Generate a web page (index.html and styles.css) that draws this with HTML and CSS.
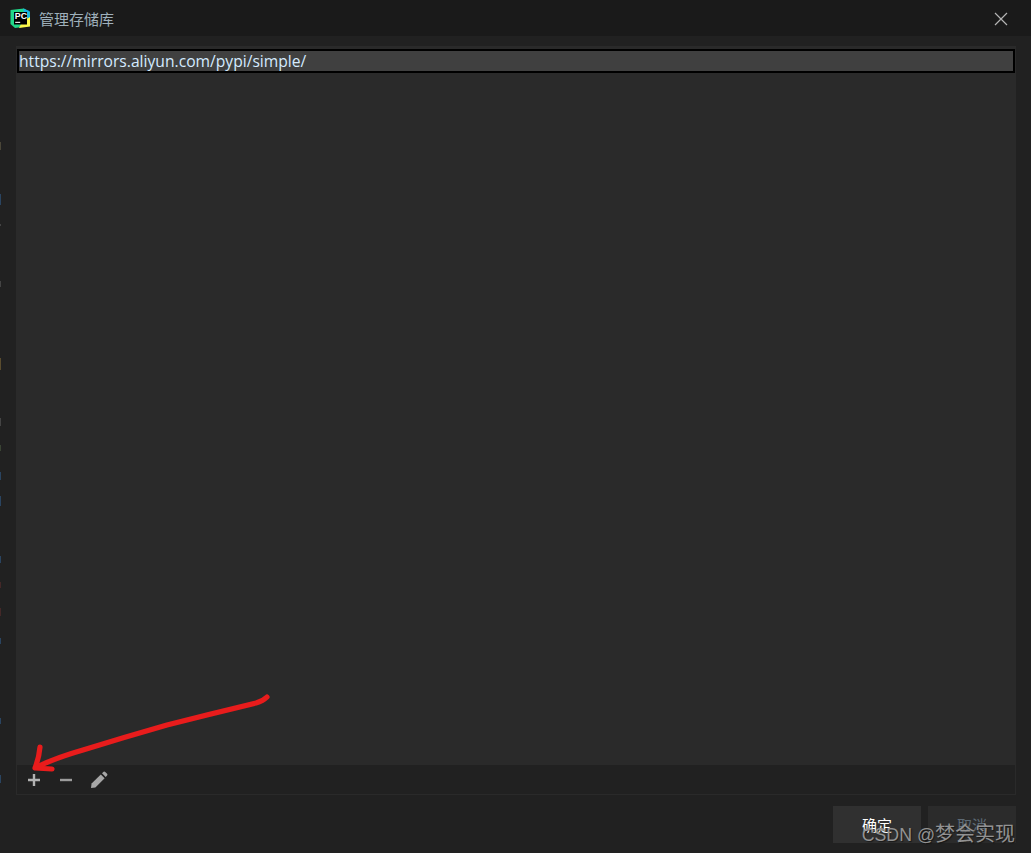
FILE: index.html
```html
<!DOCTYPE html>
<html lang="zh">
<head>
<meta charset="utf-8">
<title>管理存储库</title>
<link rel="stylesheet" href="styles.css">
</head>
<body>
<div class="dialog">
  <header class="titlebar">
    <svg class="logo" viewBox="0 0 20 20" width="20" height="20" aria-hidden="true">
      <path d="M0.5 2 L14 0.5 L20 4 L20 18 L5 20 L0.5 16 Z" fill="#21d789"/>
      <path d="M13 0.5 L19.5 3 L20 11 L15 9 Z" fill="#19b4e6"/>
      <path d="M20 9 L20 18.5 L9 20 L12 14 Z" fill="#fcf84a"/>
      <rect x="4" y="4" width="13" height="12.5" fill="#000"/>
      <text x="4.8" y="11.4" class="logo-text">PC</text>
      <rect x="5.2" y="13.8" width="5" height="1.1" fill="#fff"/>
    </svg>
    <span class="title">管理存储库</span>
    <svg class="close" viewBox="0 0 14 14" width="14" height="14" aria-hidden="true">
      <path d="M1 1 L13 13 M13 1 L1 13" stroke="#b4b4b4" stroke-width="1.2" fill="none"/>
    </svg>
  </header>
  <main class="content">
    <section class="panel">
      <div class="list">
        <div class="row">https://mirrors.aliyun.com/pypi/simple/</div>
      </div>
      <div class="toolbar">
        <svg class="tool" viewBox="0 0 16 16" width="16" height="16" aria-hidden="true">
          <path d="M2 8 H14 M8 2 V14" stroke="#b2b2b2" stroke-width="2.4" fill="none"/>
        </svg>
        <svg class="tool" viewBox="0 0 16 16" width="16" height="16" aria-hidden="true">
          <path d="M2 8 H14" stroke="#9c9c9c" stroke-width="2.4" fill="none"/>
        </svg>
        <svg class="tool" viewBox="0 0 18 18" width="18" height="18" aria-hidden="true">
          <path d="M1 17 L1.6 12.6 L10.8 3.4 L14.6 7.2 L5.4 16.4 Z" fill="#a6a6a6"/>
          <path d="M12 2.2 L13.6 0.8 Q14.4 0.2 15.2 0.9 L17.1 2.8 Q17.8 3.6 17.1 4.4 L15.7 6 Z" fill="#a6a6a6"/>
        </svg>
      </div>
    </section>
    <footer class="actions">
      <button class="btn btn-primary" type="button">确定</button>
      <button class="btn btn-secondary" type="button">取消</button>
    </footer>
  </main>
</div>
<svg class="annotation" viewBox="0 0 1031 853" width="1031" height="853" aria-hidden="true">
  <path d="M267 697 Q263 701 256 703 Q210 714 167 725 Q125 737 83 750 Q55 758 37 767" stroke="#e81c1c" stroke-width="5.2" stroke-linecap="round" fill="none"/>
  <path d="M40 747 Q39 758 35 768 L52 769" stroke="#e81c1c" stroke-width="5.2" stroke-linecap="round" stroke-linejoin="round" fill="none"/>
</svg>
<svg class="specks" viewBox="0 0 2 853" width="2" height="853" aria-hidden="true">
  <rect y="142" width="1" height="8" fill="#4a4638"/>
  <rect y="194" width="1" height="11" fill="#2a4460"/>
  <rect y="224" width="1" height="2" fill="#444"/>
  <rect y="281" width="1" height="6" fill="#444"/>
  <rect y="358" width="1" height="12" fill="#5a4c2e"/>
  <rect y="418" width="1" height="8" fill="#444"/>
  <rect y="445" width="1" height="6" fill="#3a4434"/>
  <rect y="472" width="1" height="8" fill="#2a4460"/>
  <rect y="496" width="1" height="10" fill="#2a4460"/>
  <rect y="556" width="1" height="7" fill="#2a4460"/>
  <rect y="582" width="1" height="6" fill="#442828"/>
  <rect y="608" width="1" height="8" fill="#442828"/>
  <rect y="638" width="1" height="6" fill="#2a4460"/>
  <rect y="718" width="1" height="6" fill="#2a4460"/>
  <rect y="775" width="1" height="8" fill="#2a4460"/>
</svg>
<div class="watermark">CSDN @<span class="watermark-cjk">梦会实现</span></div>
</body>
</html>
```
FILE: styles.css
```css
html, body {
  margin: 0;
  padding: 0;
  background: #212121;
  overflow: hidden;
}
body {
  width: 1031px;
  height: 853px;
  font-family: "Open Sans", "Noto Sans CJK SC", sans-serif;
}
.dialog {
  display: flex;
  flex-direction: column;
  height: 853px;
}
.titlebar {
  display: flex;
  align-items: center;
  height: 36px;
  flex: none;
  background: #1a1a1a;
  padding: 0 23px 0 10px;
  box-sizing: border-box;
}
.logo { flex: none; }
.logo-text {
  font-family: "Liberation Sans", sans-serif;
  font-size: 8.8px;
  font-weight: 700;
  fill: #fff;
}
.title {
  margin-left: 9px;
  font-family: "Noto Sans CJK SC", sans-serif;
  font-size: 15px;
  color: #9fb0bb;
  flex: 1;
}
.close { flex: none; margin-top: 2px; }
.content {
  flex: 1;
  display: flex;
  flex-direction: column;
  padding: 10px 15px 10px 16px;
  min-height: 0;
}
.panel {
  height: 749px;
  flex: none;
  display: flex;
  flex-direction: column;
}
.list {
  flex: 1;
  background: #2a2a2a;
  padding: 3px 1px 0 1px;
}
.row {
  box-sizing: border-box;
  height: 24px;
  line-height: 21px;
  background: #404040;
  border: 2px solid #000;
  font-size: 15.65px;
  color: #d4ebff;
  white-space: nowrap;
}
.toolbar {
  height: 30px;
  box-sizing: border-box;
  background: #212121;
  border: 1px solid #2a2a2a;
  border-top: none;
  display: flex;
  align-items: center;
  gap: 16px;
  padding-left: 9px;
}
.toolbar .tool { flex: none; }
.actions {
  display: flex;
  justify-content: flex-end;
  gap: 7px;
  margin-top: 11px;
}
.btn {
  width: 88px;
  height: 37px;
  border: none;
  padding: 0 0 1px;
  font-family: "Noto Sans CJK SC", sans-serif;
  font-size: 15px;
}
.btn-primary { background: #303030; color: #fff; }
.btn-secondary { background: #2b2b2b; color: #5d6a75; }
.annotation {
  position: absolute;
  left: 0;
  top: 0;
  pointer-events: none;
}
.specks {
  position: absolute;
  left: 0;
  top: 0;
}
.watermark {
  position: absolute;
  right: 16px;
  top: 821px;
  font-family: "Liberation Sans", "Noto Sans CJK SC", sans-serif;
  font-size: 17.8px;
  line-height: 26px;
  color: #929292;
  text-shadow: 1px 1px 1px rgba(0, 0, 0, 0.5);
  white-space: nowrap;
}
.watermark-cjk {
  font-size: 20px;
}
```
